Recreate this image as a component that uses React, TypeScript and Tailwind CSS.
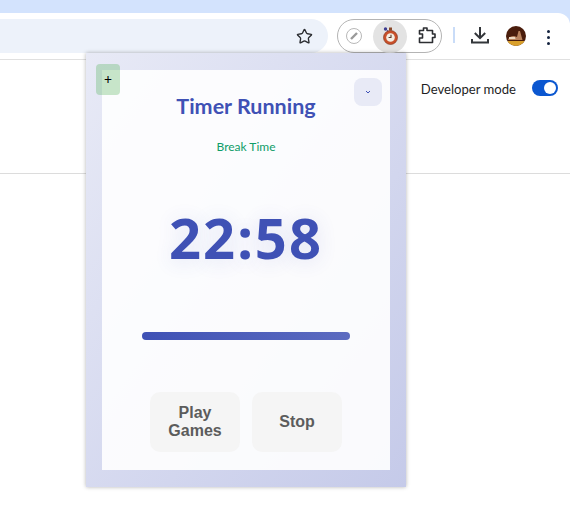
import { Star } from "lucide-react";

const Toolbar = () => {
  return (
    <div className="h-[47px] bg-white rounded-tr-xl border-b border-[#e0e0e0] flex items-start">
      {/* Address bar */}
      <div className="w-[328px] h-[34px] mt-[6px] bg-[#edf2fa] rounded-r-[17px] flex items-center justify-end pr-[15px]">
        <Star size={17} strokeWidth={1.9} className="text-[#2a2c30]" />
      </div>

      {/* Extensions pill */}
      <div className="ml-[9px] mt-[6px] w-[105px] h-[34px] rounded-[17px] border border-[#b4b4b4] flex items-center">
        <div className="ml-2 w-4 h-4 rounded-full border border-[#b8b8b8] flex items-center justify-center">
          <svg width="10" height="10" viewBox="0 0 10 10">
            <path d="M2 8 L8 2" stroke="#9a9a9a" strokeWidth="2.4" />
          </svg>
        </div>
        <div className="ml-[11px] w-[34px] h-[33px] rounded-full bg-[#e3e3e3] flex items-center justify-center">
          <svg width="18" height="20" viewBox="0 0 18 20">
            <circle cx="4.5" cy="3" r="1.7" fill="#3f3d8f" />
            <path d="M6 4.5 L7.5 6" stroke="#3f3d8f" strokeWidth="1.2" />
            <rect x="8" y="1.5" width="3" height="3" fill="#8a4a2a" />
            <circle cx="9.5" cy="11.5" r="7" fill="#c9502a" stroke="#7a3018" strokeWidth="0.6" />
            <circle cx="9.5" cy="11.5" r="4.3" fill="#f4ede2" />
            <path d="M10 8.8 V11.5 H7.6" stroke="#5a3a2a" strokeWidth="1.1" fill="none" />
          </svg>
        </div>
        <svg className="ml-[10px]" width="20" height="20" viewBox="0 0 20 20" fill="none">
          <path
            d="M2.5 4.5 H6.5 V2 H10 V4.5 H15.5 V8 H18 V11.5 H15.5 V16.5 H2.5 V12 H5.5 V8 H2.5 Z"
            stroke="#2c2e32"
            strokeWidth="1.6"
            strokeLinejoin="round"
          />
        </svg>
      </div>

      <div className="ml-[11px] mt-[14px] w-[2px] h-[16px] bg-[#c9dcf8]" />

      <svg className="ml-[15px] mt-[11px]" width="20" height="22" viewBox="0 0 20 22" fill="none">
        <path d="M10 3 V14" stroke="#33363a" strokeWidth="2" />
        <path d="M4.8 9 L10 14.2 L15.2 9" stroke="#33363a" strokeWidth="2" />
        <path d="M2 15 V18.5 H18 V15" stroke="#33363a" strokeWidth="2" />
      </svg>

      {/* Profile avatar */}
      <div className="ml-4 mt-[13px] w-5 h-5 rounded-full overflow-hidden bg-[#4a1d0c]">
        <svg width="20" height="20" viewBox="0 0 20 20">
          <rect x="0" y="15" width="20" height="5" fill="#d9a02c" />
          <path d="M2 14 Q3 10 8 10 L11 11 L12.5 5 L14 5 L16.5 14 Z" fill="#b9835e" />
          <path d="M3 11 H9 L9.5 13 H3 Z" fill="#ecd8c0" />
        </svg>
      </div>

      {/* Menu dots */}
      <div className="ml-[21px] mt-[17px] flex flex-col gap-[3px]">
        <div className="w-[3px] h-[3px] rounded-full bg-[#14233f]" />
        <div className="w-[3px] h-[3px] rounded-full bg-[#14233f]" />
        <div className="w-[3px] h-[3px] rounded-full bg-[#14233f]" />
      </div>
    </div>
  );
};

const Popup = () => {
  return (
    <div className="absolute left-[86px] top-[53px] w-[320px] h-[434px] px-4 pt-[17px] pb-[17px] bg-gradient-to-br from-[#e8eaf6] to-[#c5cae9] shadow-[0_0_4px_rgba(0,0,0,0.3)]">
      <div className="h-full bg-white/90 flex flex-col items-center">
        <h1 className="mt-[21px] text-[21.5px] leading-[30px] font-bold font-['Lato',sans-serif] text-[#3f51b5]">Timer Running</h1>
        <p className="mt-[18px] text-xs leading-4 font-['Lato',sans-serif] text-[#0f9d68]">Break Time</p>
        <div className="mt-[44px] text-[56px] leading-[76px] font-bold tracking-[2px] text-[#3f51b5] [text-shadow:0_2px_20px_rgba(63,81,181,0.14)]">
          22:58
        </div>
        <div className="mt-[57px] w-[208px] h-2 rounded-full bg-gradient-to-r from-[#3f51b5] to-[#5c6bc0]" />
        <div className="mt-[52px] flex gap-3 font-['Liberation_Sans',Arial,sans-serif]">
          <button className="w-[90px] h-[60px] rounded-[10px] bg-[#f5f5f5] text-base leading-[18px] font-bold text-[#5c5c5c]">
            Play Games
          </button>
          <button className="w-[90px] h-[60px] rounded-[10px] bg-[#f5f5f5] text-base leading-[18px] font-bold text-[#5c5c5c]">
            Stop
          </button>
        </div>
      </div>

      {/* Floating controls */}
      <div className="absolute left-[10px] top-[11px] w-6 h-[31px] rounded-[4px] bg-[#4caf50]/30 flex items-center justify-center text-[14px] text-black">
        +
      </div>
      <div className="absolute right-6 top-[25px] w-7 h-7 rounded-lg bg-[#e8eaf6] flex items-center justify-center">
        <svg width="6" height="4" viewBox="0 0 6 4" fill="none">
          <path d="M1 1 L3 3 L5 1" stroke="#3f51b5" strokeWidth="1" />
        </svg>
      </div>
    </div>
  );
};

export default function App() {
  return (
    <div className="relative w-[570px] h-[511px] overflow-hidden bg-[#d3e3fd] pt-[13px] font-['Noto_Sans','Open_Sans',sans-serif]">
      <Toolbar />
      <div className="h-[451px] bg-white">
        <div className="h-[114px] border-b border-[#dcdcdc] flex justify-end items-start pt-[20px] pr-3">
          <span className="text-[13.1px] leading-[18px] font-['Lato',sans-serif] text-[#1f1f1f]">Developer mode</span>
          <div className="ml-4 w-[26px] h-4 rounded-full bg-[#0b57d0] flex items-center justify-end pr-[2px]">
            <div className="w-3 h-3 rounded-full bg-white" />
          </div>
        </div>
      </div>
      <Popup />
    </div>
  );
}
